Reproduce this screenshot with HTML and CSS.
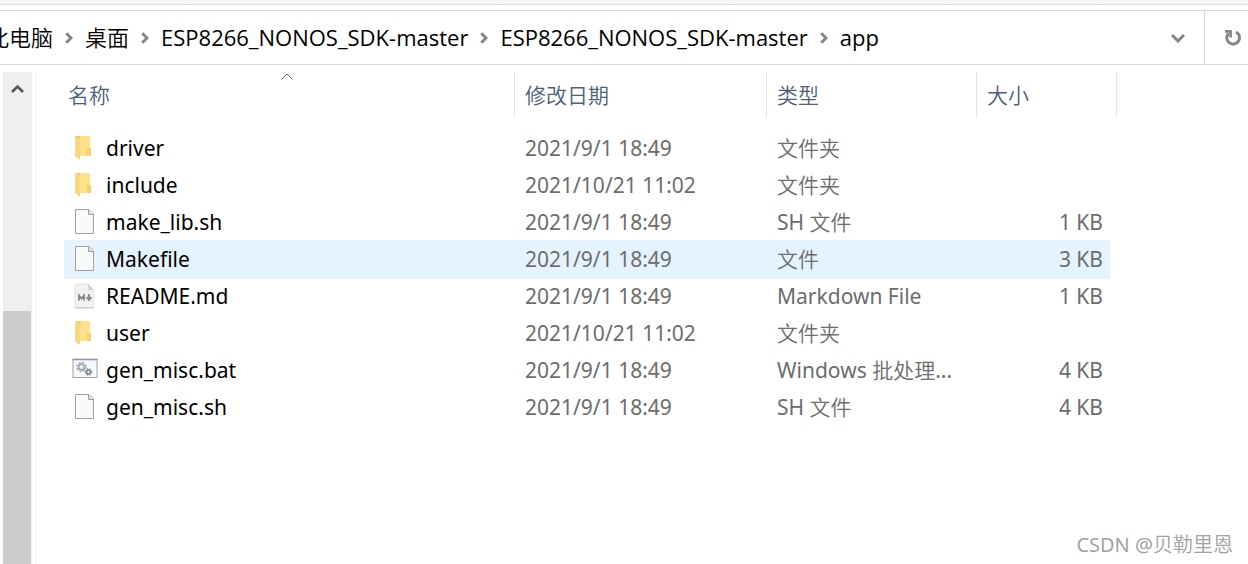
FILE: index.html
```
<!DOCTYPE html>
<html lang="zh-CN">
<head>
    <meta charset="UTF-8">
    <meta name="viewport" content="width=device-width, initial-scale=1.0">
    <title>app</title>
    <link rel="stylesheet" href="styles.css">
</head>
<body>
    <!-- shared icons -->
    <svg class="sprite" aria-hidden="true">
        <symbol id="icon-next" viewBox="0 0 8 12">
            <path d="M1.3 1.2 L6 6 L1.3 10.8" fill="none" stroke="#868686" stroke-width="3"/>
        </symbol>
        <symbol id="icon-folder" viewBox="0 0 26 26">
            <path d="M8 1 H18 V13 L19 14 V21 H8 Z" fill="#ffe08c"/>
            <path d="M15 13 H18 L19 14 V21 H15 Z" fill="#f6cf70"/>
            <path d="M3 1 L8 4 V25 L3 21 Z" fill="#fbd779"/>
            <path d="M3 1 H9 L8 4 Z" fill="#f3c95f"/>
        </symbol>
        <symbol id="icon-file" viewBox="0 0 26 26">
            <path d="M3.5 .5 H17 L21.5 5 V24.5 H3.5 Z" fill="#f9fafa" stroke="#a0a0a0"/>
            <path d="M16.5 .5 V5.5 H21.5" fill="#e4e4e4" stroke="#a0a0a0"/>
        </symbol>
    </svg>

    <div class="ribbon"><span></span><span></span><span></span><span></span><span></span></div>

    <div class="address">
        <nav class="path">
            <a href="#">此电脑</a>
            <svg class="next"><use href="#icon-next"/></svg>
            <a href="#">桌面</a>
            <svg class="next"><use href="#icon-next"/></svg>
            <a href="#">ESP8266_NONOS_SDK-master</a>
            <svg class="next"><use href="#icon-next"/></svg>
            <a href="#">ESP8266_NONOS_SDK-master</a>
            <svg class="next"><use href="#icon-next"/></svg>
            <a href="#">app</a>
        </nav>
        <button class="history" aria-label="历史记录">
            <svg width="14" height="10" viewBox="0 0 14 10"><path d="M1 2 L7 8 L13 2" fill="none" stroke="#868686" stroke-width="3"/></svg>
        </button>
        <button class="refresh" aria-label="刷新">
            <svg width="18" height="18" viewBox="0 0 18 18">
                <path d="M12 3 A6.4 6.4 0 1 1 4.6 4.2" fill="none" stroke="#868686" stroke-width="3"/>
                <path d="M1 2.4 H6.6 V8.4" fill="none" stroke="#868686" stroke-width="2.6"/>
            </svg>
        </button>
    </div>

    <div class="main">
        <div class="scrollbar">
            <button class="scroll-up" aria-label="向上滚动">
                <svg width="13" height="10" viewBox="0 0 13 10"><path d="M1 8 L6.5 2.5 L12 8" fill="none" stroke="#555" stroke-width="2.6"/></svg>
            </button>
            <div class="thumb"></div>
        </div>

        <div class="content">
            <svg class="sort" width="12" height="7" viewBox="0 0 12 7"><path d="M.5 6.5 L6 1 L11.5 6.5" fill="none" stroke="#666"/></svg>
            <table class="files">
                <colgroup>
                    <col class="col-name">
                    <col class="col-date">
                    <col class="col-type">
                    <col class="col-size">
                    <col class="col-end">
                </colgroup>
                <thead>
                    <tr>
                        <th>名称</th>
                        <th>修改日期</th>
                        <th>类型</th>
                        <th colspan="2">大小</th>
                    </tr>
                </thead>
                <tbody>
                    <tr>
                        <td><div class="name"><svg><use href="#icon-folder"/></svg>driver</div></td>
                        <td>2021/9/1 18:49</td>
                        <td>文件夹</td>
                        <td></td>
                    </tr>
                    <tr>
                        <td><div class="name"><svg><use href="#icon-folder"/></svg>include</div></td>
                        <td>2021/10/21 11:02</td>
                        <td>文件夹</td>
                        <td></td>
                    </tr>
                    <tr>
                        <td><div class="name"><svg><use href="#icon-file"/></svg>make_lib.sh</div></td>
                        <td>2021/9/1 18:49</td>
                        <td>SH 文件</td>
                        <td>1 KB</td>
                    </tr>
                    <tr class="active">
                        <td><div class="name"><svg><use href="#icon-file"/></svg>Makefile</div></td>
                        <td>2021/9/1 18:49</td>
                        <td>文件</td>
                        <td>3 KB</td>
                    </tr>
                    <tr>
                        <td>
                            <div class="name">
                                <svg viewBox="0 0 26 26">
                                    <path d="M4 1 H16 L22 7 V24 Q22 25 21 25 H4 Q3 25 3 24 V2 Q3 1 4 1 Z" fill="#f1f1f1" stroke="#e4e4e4"/>
                                    <path d="M16 1 L22 7 H17 Q16 7 16 6 Z" fill="#d2d2d2"/>
                                    <path d="M3.5 24.8 H21.5" stroke="#c4c4c4"/>
                                    <path d="M7 17.5 V12.5 L9.5 15.5 L12 12.5 V17.5" fill="none" stroke="#858585" stroke-width="1.8"/>
                                    <path d="M17 11 V16 M14.6 14.2 L17 16.8 L19.4 14.2" fill="none" stroke="#858585" stroke-width="1.8"/>
                                </svg>
                                README.md
                            </div>
                        </td>
                        <td>2021/9/1 18:49</td>
                        <td>Markdown File</td>
                        <td>1 KB</td>
                    </tr>
                    <tr>
                        <td><div class="name"><svg><use href="#icon-folder"/></svg>user</div></td>
                        <td>2021/10/21 11:02</td>
                        <td>文件夹</td>
                        <td></td>
                    </tr>
                    <tr>
                        <td>
                            <div class="name">
                                <svg viewBox="0 0 26 26">
                                    <rect x="1" y="2.5" width="24" height="18" fill="#f7f9fa" stroke="#9aa4ae"/>
                                    <path d="M.5 2.5 H25.5" stroke="#8a96a3" stroke-width="1.6"/>
                                    <circle cx="9.5" cy="10" r="4.3" fill="none" stroke="#a5aeb6" stroke-width="2" stroke-dasharray="2 1.38"/>
                                    <circle cx="9.5" cy="10" r="2.8" fill="#eef2f5" stroke="#98a4af" stroke-width="1.4"/>
                                    <circle cx="16.5" cy="15" r="3" fill="none" stroke="#8d969e" stroke-width="1.8" stroke-dasharray="1.5 .86"/>
                                    <circle cx="16.5" cy="15" r="1.8" fill="#fff" stroke="#7c8792" stroke-width="1.4"/>
                                </svg>
                                gen_misc.bat
                            </div>
                        </td>
                        <td>2021/9/1 18:49</td>
                        <td>Windows 批处理...</td>
                        <td>4 KB</td>
                    </tr>
                    <tr>
                        <td><div class="name"><svg><use href="#icon-file"/></svg>gen_misc.sh</div></td>
                        <td>2021/9/1 18:49</td>
                        <td>SH 文件</td>
                        <td>4 KB</td>
                    </tr>
                </tbody>
            </table>
        </div>
    </div>

    <div class="watermark">CSDN @贝勒里恩</div>
</body>
</html>
```
FILE: styles.css
```
* {
    box-sizing: border-box;
    margin: 0;
    padding: 0;
}

body {
    display: flex;
    flex-direction: column;
    height: 100vh;
    overflow: hidden;
    background-color: #fff;
    color: #000;
    font-family: "Noto Sans", "Noto Sans CJK SC DemiLight", "Noto Sans CJK SC Light", "Noto Sans CJK SC", sans-serif;
    font-size: 21px;
    line-height: 28px;
}

button {
    background: none;
    border: none;
    display: flex;
    align-items: center;
    justify-content: center;
    cursor: pointer;
}

.sprite {
    position: absolute;
    width: 0;
    height: 0;
}

/* bottom edge of the ribbon */
.ribbon {
    display: grid;
    grid-template-columns: 15% 25% 19% 17% 12%;
    height: 5px;
    flex: none;
    padding-bottom: 3px;
    background-color: #f5f6f7;
    border-bottom: 1px solid #dadbdc;
}

.ribbon span {
    border-right: 1px solid #e2e3e4;
}

/* address bar */
.address {
    display: flex;
    flex: none;
    height: 55px;
    margin-top: 5px;
    border-top: 1px solid #d9d9d9;
    border-bottom: 1px solid #d9d9d9;
}

.path {
    display: flex;
    flex: 1;
    align-items: center;
    gap: 12px;
    margin-left: -13px;
    font-family: "Open Sans", "Noto Sans CJK SC DemiLight", "Noto Sans CJK SC Light", "Noto Sans CJK SC", sans-serif;
    font-size: 22px;
    white-space: nowrap;
}

.path a {
    padding-bottom: 2px;
    color: #000;
    text-decoration: none;
}

.next {
    width: 8px;
    height: 12px;
}

.history {
    width: 52px;
}

.refresh {
    width: 44px;
    padding-left: 13px;
    border-left: 1px solid #d9d9d9;
}

/* file list */
.main {
    display: flex;
    flex: 1;
    padding-top: 7px;
}

.scrollbar {
    display: flex;
    flex-direction: column;
    width: 29px;
    margin-left: 3px;
    background-color: #efefef;
}

.scroll-up {
    flex: 239;
    align-items: flex-start;
}

.scroll-up svg {
    margin-top: 12px;
}

.thumb {
    flex: 253;
    margin-right: 1px;
    background-color: #cdcdcd;
}

.content {
    position: relative;
    flex: 1;
    margin-left: 3px;
    padding-left: 27px;
    border-left: 2px solid #f7f7f7;
}

.sort {
    position: absolute;
    top: 1px;
    left: 244px;
}

.files {
    table-layout: fixed;
    width: 1053px;
    border-collapse: separate;
    border-spacing: 0;
}

.col-name { width: 451px; }
.col-date { width: 252px; }
.col-type { width: 210px; }
.col-size { width: 133px; }
.col-end { width: 7px; }

.files th {
    height: 46px;
    padding-left: 10px;
    border-right: 1px solid #e5e5e5;
    color: #4c607a;
    font-weight: normal;
    text-align: left;
}

.files th:first-child {
    padding-left: 4px;
}

.files tbody::before {
    content: "";
    display: block;
    height: 12px;
}

.files td {
    height: 37px;
    padding-bottom: 2px;
    padding-left: 10px;
    color: #6d6d6d;
    white-space: nowrap;
}

.files td:first-child {
    padding-left: 8px;
    color: #000;
}

.files td:nth-child(4) {
    padding-right: 7px;
    text-align: right;
}

.files .active td {
    background-color: #e5f3ff;
    box-shadow: 0 1px #e5f3ff, 0 -1px #e5f3ff;
}

.name {
    display: flex;
    align-items: center;
    gap: 8px;
}

.name svg {
    width: 26px;
    height: 26px;
}

.watermark {
    position: absolute;
    right: 15px;
    bottom: 5px;
    color: #a3a3a3;
    font-size: 20px;
}
```
